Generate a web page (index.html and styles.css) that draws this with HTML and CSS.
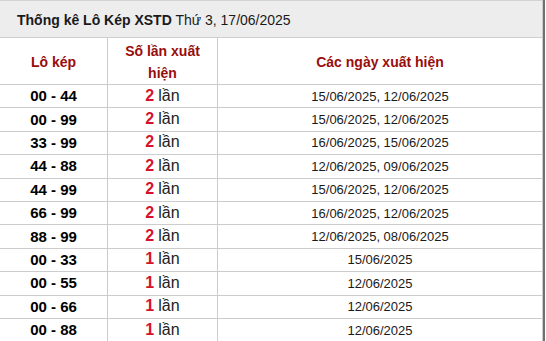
FILE: index.html
```html
<!DOCTYPE html>
<html lang="vi">
<head>
<meta charset="utf-8">
<link rel="stylesheet" href="styles.css">
</head>
<body>
<div class="panel">
  <div class="title"><b>Thống kê Lô Kép XSTD</b> Thứ 3, 17/06/2025</div>
  <div class="row head">
    <div class="cell">Lô kép</div>
    <div class="cell">Số lần xuất<br>hiện</div>
    <div class="cell">Các ngày xuất hiện</div>
  </div>
  <div class="row"><div class="cell pair">00 - 44</div><div class="cell cnt"><b>2</b> lần</div><div class="cell dates">15/06/2025, 12/06/2025</div></div>
  <div class="row"><div class="cell pair">00 - 99</div><div class="cell cnt"><b>2</b> lần</div><div class="cell dates">15/06/2025, 12/06/2025</div></div>
  <div class="row"><div class="cell pair">33 - 99</div><div class="cell cnt"><b>2</b> lần</div><div class="cell dates">16/06/2025, 15/06/2025</div></div>
  <div class="row"><div class="cell pair">44 - 88</div><div class="cell cnt"><b>2</b> lần</div><div class="cell dates">12/06/2025, 09/06/2025</div></div>
  <div class="row"><div class="cell pair">44 - 99</div><div class="cell cnt"><b>2</b> lần</div><div class="cell dates">15/06/2025, 12/06/2025</div></div>
  <div class="row"><div class="cell pair">66 - 99</div><div class="cell cnt"><b>2</b> lần</div><div class="cell dates">16/06/2025, 12/06/2025</div></div>
  <div class="row"><div class="cell pair">88 - 99</div><div class="cell cnt"><b>2</b> lần</div><div class="cell dates">12/06/2025, 08/06/2025</div></div>
  <div class="row"><div class="cell pair">00 - 33</div><div class="cell cnt"><b>1</b> lần</div><div class="cell dates">15/06/2025</div></div>
  <div class="row"><div class="cell pair">00 - 55</div><div class="cell cnt"><b>1</b> lần</div><div class="cell dates">12/06/2025</div></div>
  <div class="row"><div class="cell pair">00 - 66</div><div class="cell cnt"><b>1</b> lần</div><div class="cell dates">12/06/2025</div></div>
  <div class="row"><div class="cell pair">00 - 88</div><div class="cell cnt"><b>1</b> lần</div><div class="cell dates">12/06/2025</div></div>
</div>
</body>
</html>
```

FILE: styles.css
```css
html, body {
  margin: 0;
  padding: 0;
  background: #ffffff;
}
body {
  font-family: "Liberation Sans", Arial, sans-serif;
  color: #111;
  overflow: hidden;
}
.panel {
  width: 543px;
  border-right: 2px solid #707070;
}
.title {
  box-sizing: border-box;
  height: 38px;
  border-top: 1px solid #d2d2d2;
  border-right: 1px solid #cccccc;
  border-bottom: 1px solid #cfcfcf;
  background: #eeeded;
  padding-left: 17px;
  padding-top: 2px;
  font-size: 14px;
  line-height: 35px;
  color: #1a1a1a;
}
.row {
  display: grid;
  grid-template-columns: 108px 110px 1fr;
}
.cell {
  box-sizing: border-box;
  border-right: 1px solid #cccccc;
  border-bottom: 1px solid #cccccc;
  height: 23.4px;
  display: flex;
  align-items: center;
  justify-content: center;
  text-align: center;
}
.head .cell {
  height: 47px;
  padding-top: 2px;
  color: #980d0d;
  font-weight: bold;
  font-size: 14px;
  line-height: 22px;
}
.pair {
  font-weight: bold;
  font-size: 15px;
  color: #000;
  padding-bottom: 1px;
}
.cnt {
  font-size: 16px;
  color: #222;
  padding-bottom: 1px;
}
.cnt b {
  color: #d4122c;
  margin-right: 4px;
}
.dates {
  font-size: 13px;
  color: #1a1a1a;
}
```
